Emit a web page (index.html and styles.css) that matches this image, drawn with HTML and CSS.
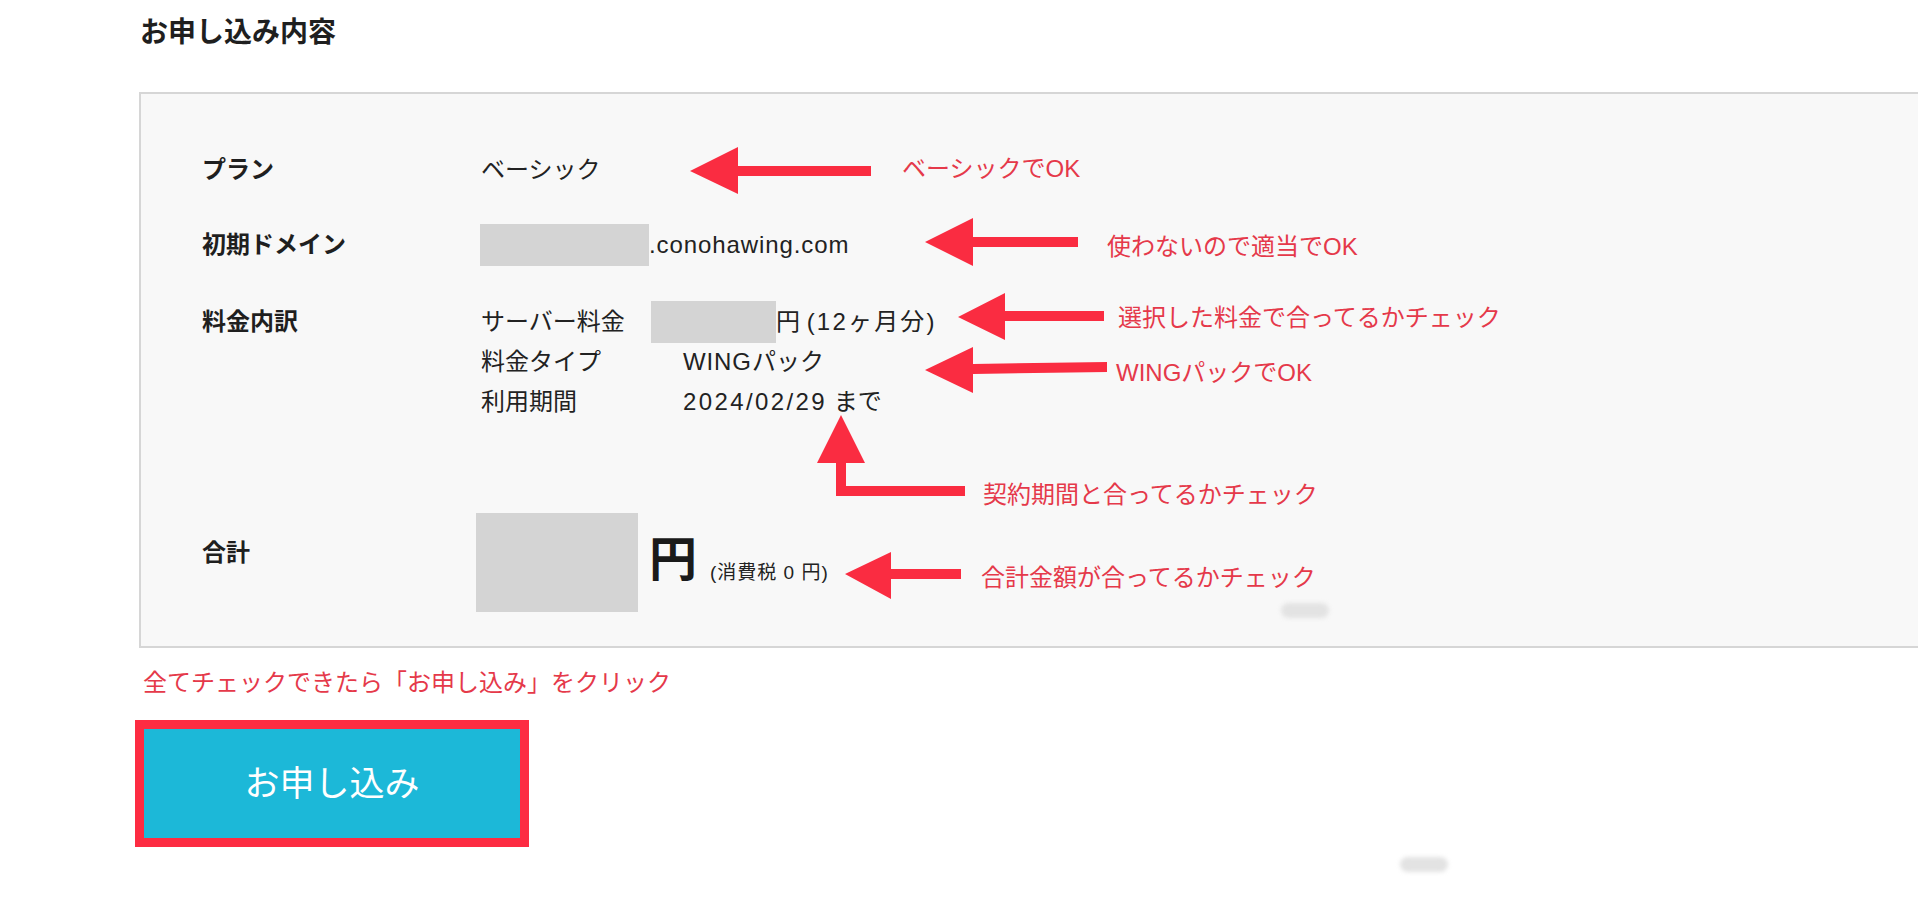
FILE: index.html
```html
<!DOCTYPE html>
<html lang="ja">
<head>
<meta charset="utf-8">
<title>お申し込み内容</title>
<link rel="stylesheet" href="styles.css">
</head>
<body>
<div class="page">
  <h2 class="title">お申し込み内容</h2>
  <div class="summary">
    <div class="row row-plan">
      <div class="label">プラン</div>
      <div class="value">ベーシック</div>
    </div>
    <div class="row row-domain">
      <div class="label">初期ドメイン</div>
      <div class="value domain"><span class="redact redact-domain"></span><span class="latin">.conohawing.com</span></div>
    </div>
    <div class="row row-fee">
      <div class="label">料金内訳</div>
      <div class="value breakdown">
        <div class="line"><span class="sub">サーバー料金</span><span class="redact redact-fee"></span><span>円 <span class="period">(12ヶ月分)</span></span></div>
        <div class="line"><span class="sub sub-wide">料金タイプ</span><span><span class="latin">WING</span>パック</span></div>
        <div class="line"><span class="sub sub-wide">利用期間</span><span><span class="num">2024/02/29</span> まで</span></div>
      </div>
    </div>
    <div class="row row-total">
      <div class="label">合計</div>
      <div class="value total">
        <span class="redact redact-total"></span>
        <span class="amount"><span class="yen">円</span><span class="tax">(消費税 0 円)</span></span>
      </div>
    </div>
  </div>
  <p class="note">全てチェックできたら「お申し込み」をクリック</p>
  <div class="cta-frame"><button class="cta" type="button">お申し込み</button></div>
</div>

<div class="annotations">
  <svg class="arrows" width="1918" height="918" viewBox="0 0 1918 918" xmlns="http://www.w3.org/2000/svg">
    <g fill="#fa2c41">
      <polygon points="690,171 738,147 738,166 871,166 871,176 738,176 738,194"/>
      <polygon points="925,242 973,218 973,237 1078,237 1078,247 973,247 973,266"/>
      <polygon points="958,317 1005,293 1005,311 1104,311 1104,321 1005,321 1005,340"/>
      <polygon points="925,370 973,347 973,364 1107,362 1107,372 973,374 973,393"/>
      <polygon points="841,415 865,463 846,463 846,486 965,486 965,496 836,496 836,463 817,463"/>
      <polygon points="845,574 891,552 891,569 961,569 961,579 891,579 891,599"/>
    </g>
  </svg>
  <span class="ann ann-1">ベーシックでOK</span>
  <span class="ann ann-2">使わないので適当でOK</span>
  <span class="ann ann-3">選択した料金で合ってるかチェック</span>
  <span class="ann ann-4">WINGパックでOK</span>
  <span class="ann ann-5">契約期間と合ってるかチェック</span>
  <span class="ann ann-6">合計金額が合ってるかチェック</span>
  <span class="smudge smudge-1"></span>
  <span class="smudge smudge-2"></span>
</div>
</body>
</html>
```
FILE: styles.css
```css
html, body {
  margin: 0;
  padding: 0;
}

body {
  position: relative;
  width: 1918px;
  height: 918px;
  overflow: hidden;
  background: #ffffff;
  color: #222222;
  font-family: "Liberation Sans", "Noto Sans CJK JP", sans-serif;
}

.page {
  padding: 13px 0 0 139px;
}

.title {
  margin: 0 0 0 1px;
  height: 40px;
  font-size: 28px;
  line-height: 40px;
  font-weight: 700;
  color: #1f1f1f;
}

.summary {
  margin-top: 39px;
  border: 2px solid #d6d6d6;
  border-right: none;
  background: #f8f8f8;
  padding: 56px 0 34px 61px;
}

.row {
  display: flex;
  align-items: flex-start;
}

.label {
  width: 279px;
  flex: none;
  font-size: 24px;
  line-height: 40px;
  font-weight: 700;
  color: #1f1f1f;
}

.value {
  font-size: 24px;
  line-height: 40px;
  color: #222222;
}

.latin {
  letter-spacing: 0.9px;
}

.num {
  letter-spacing: 2.4px;
}

.period {
  letter-spacing: 2.2px;
}

.row-plan {
  height: 40px;
}

.row-domain {
  margin-top: 35px;
  height: 40px;
}

.domain {
  display: flex;
  align-items: center;
  height: 40px;
}

.redact {
  display: inline-block;
  background: #d4d4d4;
  flex: none;
}

.redact-domain {
  width: 169px;
  height: 42px;
  margin-left: -1px;
}

.row-fee {
  margin-top: 37px;
}

.line {
  display: flex;
  align-items: center;
  height: 40px;
}

.sub {
  width: 170px;
  flex: none;
}

.sub-wide {
  width: 202px;
}

.redact-fee {
  width: 125px;
  height: 42px;
}

.row-total {
  margin-top: 91px;
}

.row-total .label {
  padding-top: 20px;
}

.total {
  display: flex;
  align-items: center;
}

.redact-total {
  width: 162px;
  height: 99px;
  margin-left: -5px;
}

.amount {
  display: flex;
  align-items: baseline;
  margin-left: 11px;
}

.yen {
  font-size: 48px;
  line-height: 48px;
  font-weight: 700;
  color: #1a1a1a;
  position: relative;
  top: -3px;
}

.tax {
  margin-left: 13px;
  font-size: 19px;
  line-height: 24px;
  letter-spacing: 1px;
  color: #222222;
}

.note {
  margin: 15px 0 0 4px;
  font-size: 24px;
  line-height: 40px;
  color: #e5394a;
}

.cta-frame {
  margin: 17px 0 0 -4px;
  width: 376px;
  height: 109px;
  border: 9px solid #fd2c42;
}

.cta {
  display: block;
  width: 100%;
  height: 100%;
  margin: 0;
  padding: 0;
  border: none;
  background: #1cb8d8;
  color: #ffffff;
  font-family: "Liberation Sans", "Noto Sans CJK JP", sans-serif;
  font-size: 35px;
  line-height: 40px;
  cursor: pointer;
}

/* annotation layer drawn over the screenshot */
.annotations {
  position: absolute;
  left: 0;
  top: 0;
  width: 1918px;
  height: 918px;
  pointer-events: none;
}

.arrows {
  position: absolute;
  left: 0;
  top: 0;
}

.ann {
  position: absolute;
  font-size: 24px;
  line-height: 40px;
  color: #e5394a;
  white-space: nowrap;
}

.ann-1 { left: 902px; top: 149px; }
.ann-2 { left: 1107px; top: 227px; }
.ann-3 { left: 1118px; top: 298px; }
.ann-4 { left: 1116px; top: 353px; }
.ann-5 { left: 983px; top: 475px; }
.ann-6 { left: 981px; top: 558px; }

.smudge {
  position: absolute;
  width: 48px;
  height: 15px;
  border-radius: 8px;
  background: #e3e3e3;
  filter: blur(2px);
}

.smudge-1 { left: 1281px; top: 603px; }
.smudge-2 { left: 1400px; top: 857px; }
```
